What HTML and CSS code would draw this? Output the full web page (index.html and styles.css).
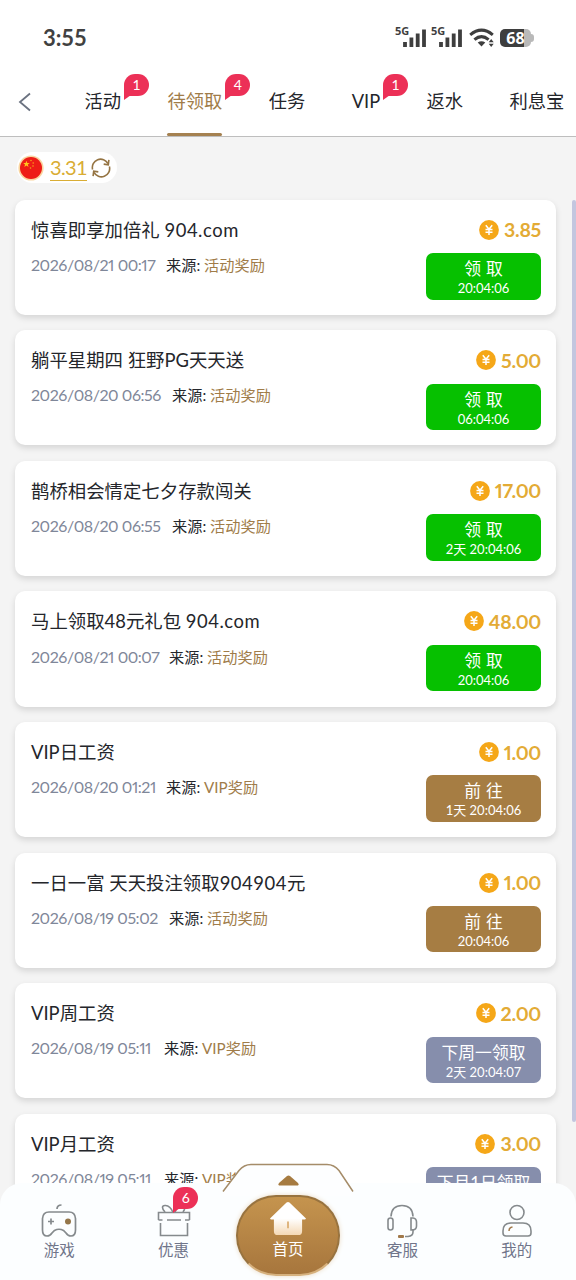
FILE: index.html
```html
<!DOCTYPE html>
<html lang="zh-CN">
<head>
<meta charset="utf-8">
<title>待领取</title>
<link rel="stylesheet" href="styles.css">
</head>
<body>
<svg class="defs" aria-hidden="true">
  <symbol id="coin" viewBox="0 0 20 20"><circle cx="10" cy="10" r="9.9" fill="#f5a718"/><path d="M6.8 5.2L10 9.3l3.2-4.1M10 9.3v5.8M6.5 9.6h7M6.5 12.2h7" fill="none" stroke="#fff" stroke-width="1.5"/></symbol>
  <symbol id="signal" viewBox="0 0 23 18"><path d="M2 18v-5M8.4 18V8.5M14.7 18V4.5M21 18V.5" stroke="#3e3e3e" stroke-width="3.8"/></symbol>
</svg>
<div class="page">
  <header class="status">
    <span class="clock">3:55</span>
    <div class="indicators">
      <span class="net">5G</span><svg class="bars"><use href="#signal"/></svg>
      <span class="net second">5G</span><svg class="bars"><use href="#signal"/></svg>
      <svg class="wifi" viewBox="0 0 26 19"><g fill="none" stroke="#3e3e3e" stroke-width="3"><path d="M1.2 6.8Q12.5-2.5 23.8 6.8"/><path d="M5.4 11.6Q12.5 5.6 19.6 11.6"/></g><path d="M8.7 14.6q3.8-2.8 7.6 0L12.5 18.6zM19.7 14.2l2.5-3.1 2.5 3.1zM19.7 15.8l2.5 3.1 2.5-3.1z" fill="#3e3e3e"/></svg>
      <span class="battery">68</span>
    </div>
  </header>
  <nav class="tabs">
    <svg class="back" viewBox="0 0 14 20"><path d="M12 1.5L2 10l10 8.5" fill="none" stroke="#6b7280" stroke-width="1.8"/></svg>
    <span class="tab">活动<i class="badge">1</i></span>
    <span class="tab active">待领取<i class="badge">4</i></span>
    <span class="tab">任务</span>
    <span class="tab">VIP<i class="badge">1</i></span>
    <span class="tab">返水</span>
    <span class="tab">利息宝</span>
  </nav>
  <main class="content">
    <div class="balance">
      <svg class="flag" viewBox="0 0 26 26"><circle cx="13" cy="13" r="12.6" fill="#f9d5a0"/><circle cx="13" cy="13" r="11" fill="#ee1c16"/><path d="M8.4 5.8l.9 2.2 2.4.1-1.9 1.5.7 2.3-2.1-1.3-2 1.3.6-2.3-1.8-1.5 2.4-.1z" fill="#ffc51d"/><g fill="#f9a01b"><circle cx="13" cy="5.5" r=".8"/><circle cx="15.2" cy="8" r=".8"/><circle cx="15" cy="11" r=".8"/><circle cx="12.5" cy="13" r=".8"/></g></svg>
      <span class="sum">3.31</span>
      <svg class="refresh" viewBox="0 0 20 20"><g fill="none" stroke="#957443" stroke-width="1.6"><path d="M1.6 11.500A8.300 8.300 0 0 1 17 5.600M18.400 8.500a8.300 8.300 0 0 1-15.400 5.900"/><path d="M17.900 1.800l-.6 5-4.600-.7M2.100 18.200l.6-5 4.600.7"/></g></svg>
    </div>
    <div class="list">
      <article class="card"><div class="info"><h2>惊喜即享加倍礼 <span>904.com</span></h2><p><time class="d1">2026/08/21 00:17</time>来源: <b>活动奖励</b></p></div><div class="side"><div class="amount"><svg><use href="#coin"/></svg>3.85</div><div class="btn green"><span class="wide">领取</span><small>20:04:06</small></div></div></article>
      <article class="card"><div class="info"><h2>躺平星期四 狂野PG天天送</h2><p><time class="d2">2026/08/20 06:56</time>来源: <b>活动奖励</b></p></div><div class="side"><div class="amount"><svg><use href="#coin"/></svg>5.00</div><div class="btn green"><span class="wide">领取</span><small>06:04:06</small></div></div></article>
      <article class="card"><div class="info"><h2>鹊桥相会情定七夕存款闯关</h2><p><time class="d2">2026/08/20 06:55</time>来源: <b>活动奖励</b></p></div><div class="side"><div class="amount"><svg><use href="#coin"/></svg>17.00</div><div class="btn green"><span class="wide">领取</span><small>2天 20:04:06</small></div></div></article>
      <article class="card"><div class="info"><h2>马上领取48元礼包 <span>904.com</span></h2><p><time class="d3">2026/08/21 00:07</time>来源: <b>活动奖励</b></p></div><div class="side"><div class="amount"><svg><use href="#coin"/></svg>48.00</div><div class="btn green"><span class="wide">领取</span><small>20:04:06</small></div></div></article>
      <article class="card"><div class="info"><h2>VIP日工资</h2><p><time class="d1">2026/08/20 01:21</time>来源: <b>VIP奖励</b></p></div><div class="side"><div class="amount"><svg><use href="#coin"/></svg>1.00</div><div class="btn brown"><span class="wide">前往</span><small>1天 20:04:06</small></div></div></article>
      <article class="card"><div class="info"><h2>一日一富 天天投注领取<span>904904</span>元</h2><p><time class="d3">2026/08/19 05:02</time>来源: <b>活动奖励</b></p></div><div class="side"><div class="amount"><svg><use href="#coin"/></svg>1.00</div><div class="btn brown"><span class="wide">前往</span><small>20:04:06</small></div></div></article>
      <article class="card"><div class="info"><h2>VIP周工资</h2><p><time class="d4">2026/08/19 05:11</time>来源: <b>VIP奖励</b></p></div><div class="side"><div class="amount"><svg><use href="#coin"/></svg>2.00</div><div class="btn slate"><span>下周一领取</span><small>2天 20:04:07</small></div></div></article>
      <article class="card"><div class="info"><h2>VIP月工资</h2><p><time class="d4">2026/08/19 05:11</time>来源: <b>VIP奖励</b></p></div><div class="side"><div class="amount"><svg><use href="#coin"/></svg>3.00</div><div class="btn slate"><span>下月1日领取</span></div></div></article>
    </div>
  </main>
  <div class="scrollbar"></div>
  <footer class="dock">
    <svg class="handle" viewBox="0 0 136 34"><path d="M3 30L18 9Q23 2.5 31 2.5h74Q113 2.5 118 9l15 21v4H3z" fill="#fdfeff"/><path d="M3 29.5L19 8.5Q24 2.5 31 2.5h76Q114 2.5 119 8.5l14 21" fill="none" stroke="#a58c69" stroke-width="1.5"/><path d="M59 23.500q-1.500-1 0-2.500l8-7q1.500-1.200 3 0l8 7q1.500 1.500 0 2.500z" fill="#a67b41"/></svg>
    <a class="item"><svg viewBox="0 0 38 36"><g fill="none" stroke="#858a8d" stroke-width="1.7"><path d="M9 9h20q6 0 6.500 6.500V27q0 6-4.500 6-3 0-5-3l-2.500-2.500q-4.500-2.500-9 0L12 30q-2 3-5 3-4.500 0-4.500-6V15.500Q3 9 9 9zM17 6q0-4 4.500-4"/><path d="M8 18.500h6M11 15.500v6"/></g><circle cx="28" cy="18.500" r="3" fill="#94764a"/></svg>游戏</a>
    <a class="item"><svg viewBox="0 0 38 36"><g fill="none" stroke="#858a8d" stroke-width="1.600"><path d="M3.500 17v-7.500h31V17M3.500 17h4M12 17h14M30 17h4.500M5.500 20v12.500h27V20"/><path d="M18 9.500Q15 2 10 2.500T10 9M20 9.500Q22 2 27 2.500T28 9"/></g></svg>优惠<i class="badge">6</i></a>
    <a class="home"><svg viewBox="0 0 38 36"><defs><linearGradient id="hg" x2="0" y2="1"><stop offset=".5" stop-color="#fff"/><stop offset="1" stop-color="#f4d8b4"/></linearGradient></defs><path d="M17.500 1.500q1.500-1.200 3 0L37.500 18q-.5 1.500-2 1h-2v12q0 4-4 4h-21q-4 0-4-4V19h-2Q1 19.500.5 18z" fill="url(#hg)"/><path d="M19 21v7" stroke="#dbad70" stroke-width="1.800"/></svg>首页</a>
    <a class="item"><svg viewBox="0 0 38 36"><g fill="none" stroke="#858a8d" stroke-width="1.600"><path d="M8 13.500Q8.500 2.500 19 2.500t11 11M30 26v3q0 4-5 4.500h-3"/><rect x="5" y="15" width="5" height="12" rx="2.500"/><path d="M28 15h2q3.500.5 3.500 4v4q0 3.500-3.500 4h-2z"/></g><rect x="15" y="32" width="6" height="3" rx="1" fill="#a1794a"/></svg>客服</a>
    <a class="item"><svg viewBox="0 0 38 36"><g fill="none" stroke="#858a8d" stroke-width="1.600"><circle cx="19" cy="9.500" r="7"/><path d="M8 33q-3 0-3-3v-2q0-8 8-8h12q8 0 8 8v2q0 3-3 3z"/></g><path d="M11 28q0-3.500 3.500-4" fill="none" stroke="#a1794a" stroke-width="1.500"/></svg>我的</a>
  </footer>
</div>
</body>
</html>
```
FILE: styles.css
```css
* { box-sizing: border-box; }
body { margin: 0; font-family: Lato, "Noto Sans CJK SC", sans-serif; color: #24262b; }
.defs { position: absolute; width: 0; height: 0; }
.page { position: relative; width: 576px; height: 1280px; overflow: hidden; background: #fff; display: flex; flex-direction: column; }
.status { height: 68px; padding: 7px 45px 0 43px; display: flex; justify-content: space-between; align-items: center; flex: none; }
.clock { font: 700 22px/30px Lato, sans-serif; letter-spacing: -.1px; color: #414141; }
.indicators { display: flex; align-items: center; height: 22px; }
.net { align-self: flex-start; font: 700 11px/12px "Noto Sans", sans-serif; width: 15px; margin-right: -7px; margin-top: -2px; color: #3e3e3e; }
.net.second { margin-left: 5px; }
.bars { width: 23px; height: 18px; }
.wifi { width: 26px; height: 19px; margin: 0 5px 0 7px; }
.battery { position: relative; width: 31px; height: 18px; border-radius: 5px; background: linear-gradient(90deg, #3e3e3e 76%, #b9b9b9 76%); color: #fff; font: 700 16px/18px "Open Sans", sans-serif; text-align: center; }
.battery::after { content: ""; position: absolute; left: 31px; top: 5px; width: 3px; height: 8px; border-radius: 0 4px 4px 0; background: #b9b9b9; }
.tabs { height: 69px; flex: none; display: flex; gap: 46.700px; border-bottom: 1px solid #bebebe; }
.back { width: 14px; height: 20px; margin: 24px -.700px 0 18px; flex: none; }
.tab { position: relative; flex: none; font-size: 18.300px; line-height: 66px; white-space: nowrap; }
.tab + .tab { margin-left: -.300px; }
.back + .tab { margin-left: 6.500px; }
.active { color: #a07c49; }
.active::after { content: ""; position: absolute; left: 0; right: 0; bottom: 0; height: 3px; border-radius: 2px; background: #a58150; }
.badge { position: absolute; left: calc(100% + 3px); top: 6px; width: 25px; height: 22px; border-radius: 12px 12px 12px 0; background: #ec3057; color: #fff; font: normal 14px/22px Lato, sans-serif; text-align: center; }
.badge::after { content: ""; position: absolute; left: 0; bottom: -4px; border-top: 5px solid #ec3057; border-right: 7px solid transparent; }
.content { flex: 1; background: #f4f4f4; padding: 15px 20px 0 15px; }
.balance { width: 100px; height: 31px; margin: 0 0 16.700px 2px; padding: 0 6px 0 1px; border-radius: 16px; background: #fff; display: flex; align-items: center; justify-content: space-between; }
.flag { width: 26px; height: 26px; flex: none; }
.sum { font-size: 20px; line-height: 25px; letter-spacing: -.600px; color: #d9ad35; border-bottom: 1px solid #d9ad35; margin-left: 5px; }
.refresh { width: 20px; height: 20px; margin-left: 3px; flex: none; }
.list { display: flex; flex-direction: column; gap: 15.400px; }
.card { height: 115.200px; flex: none; padding: 16px 15px 0 16px; border-radius: 10px; background: #fff; box-shadow: 0 3px 6px rgba(0,0,0,.13); display: flex; justify-content: space-between; }
h2 { margin: 0 0 9.200px; font-weight: 400; font-size: 18.400px; line-height: 28px; }
h2 span { letter-spacing: .550px; }
p { margin: 0; font-size: 15.200px; line-height: 24px; white-space: nowrap; }
p b { font-weight: 400; color: #a07c49; }
time { display: inline-block; font-size: 16px; letter-spacing: -.450px; color: #7f8799; font-feature-settings: "pnum"; }
.d1 { width: 135px; }
.d2 { width: 141px; }
.d3 { width: 138px; }
.d4 { width: 133px; }
.side { width: 115px; }
.amount { display: flex; align-items: center; justify-content: flex-end; gap: 5px; height: 28px; margin-bottom: 9.400px; font-size: 19.500px; font-weight: 700; color: #e3ab35; font-feature-settings: "pnum"; letter-spacing: -.300px; }
.amount svg { width: 20px; height: 20px; }
.btn { height: 46.500px; padding-top: 5px; border-radius: 7px; color: #fff; display: flex; flex-direction: column; align-items: center; font-size: 16.800px; line-height: 22px; }
.btn small { font-size: 13px; line-height: 17px; }
.wide { letter-spacing: 5px; margin-right: -5px; }
.green { background: #06c000; }
.brown { background: #a67d43; }
.slate { background: #868eac; }
.scrollbar { position: absolute; right: 0; top: 200px; width: 4px; height: 922px; border-radius: 2px; background: #c3c6df; }
.dock { position: absolute; left: 0; right: 0; bottom: 0; height: 97px; padding: 0 2px; border-radius: 22px 22px 0 0; background: #fcfeff; display: grid; grid-template-columns: repeat(5, 1fr); }
.handle { position: absolute; left: 220px; top: -21px; width: 136px; height: 34px; }
.item, .home { position: relative; display: flex; flex-direction: column; align-items: center; font-size: 15.500px; line-height: 22px; color: #70758a; }
.item { padding-top: 20px; }
.item > svg { width: 38px; height: 36px; }
.item .badge { left: 57px; top: 4px; }
.home { width: 104px; height: 81px; justify-self: center; margin-top: 12px; padding-top: 4px; border-radius: 40px; border: 2px solid #98733f; border-bottom-color: #d6b17e; background: linear-gradient(#c5944e, #a7763d); color: #fff; box-shadow: 0 0 5px #ecdcc5; }
.home > svg { width: 38px; height: 35px; margin-bottom: 2px; }
```
